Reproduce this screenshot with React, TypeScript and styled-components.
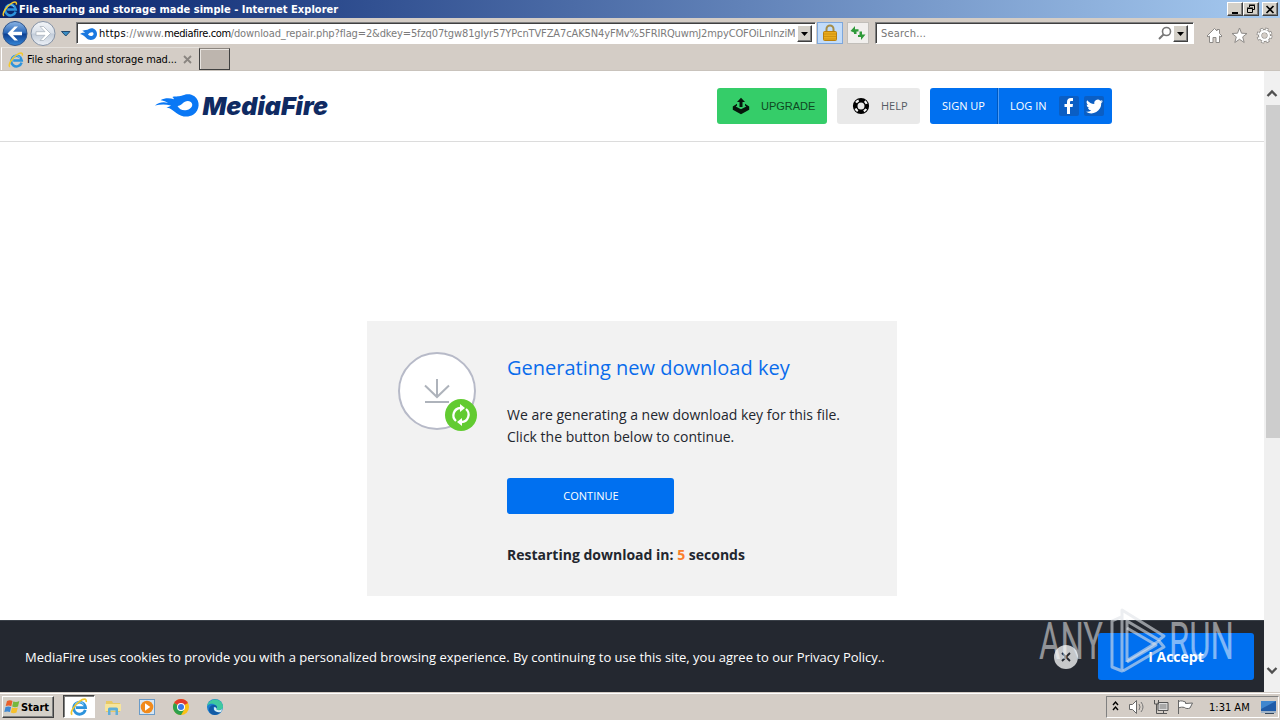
import type { ReactNode } from 'react'
import styled, { createGlobalStyle, css } from 'styled-components'

const GlobalStyle = createGlobalStyle`
  * {
    box-sizing: border-box;
  }
  body {
    margin: 0;
    overflow: hidden;
    background: #fff;
  }
  svg {
    display: block;
    flex: none;
  }
  button {
    margin: 0;
    padding: 0;
    border: 0;
    font: inherit;
  }
`

const ui = css`
  font-family: 'DejaVu Sans Condensed', 'DejaVu Sans', sans-serif;
  font-stretch: condensed;
  font-size: 11px;
  white-space: nowrap;
`

const raised = css`
  background: #d4d0c8;
  border: 1px solid;
  border-color: #fff #404040 #404040 #fff;
  box-shadow: inset -1px -1px 0 #808080;
`

const Screen = styled.div`
  position: relative;
  display: flex;
  flex-direction: column;
  width: 1280px;
  height: 720px;
  overflow: hidden;
  font-family: 'Open Sans', sans-serif;
`

/* window chrome */

const TitleBar = styled.header`
  ${ui}
  display: flex;
  align-items: center;
  height: 18px;
  padding: 0 2px;
  gap: 1px;
  color: #fff;
  font-weight: 700;
  background: linear-gradient(90deg, #0a246a 0%, #1c3a80 16%, #a6caf0 100%);
`

const TitleText = styled.span`
  flex: 1;
  letter-spacing: 0.03px;
`

const WindowButton = styled.button<{ $gap?: number }>`
  ${raised}
  width: 16px;
  height: 14px;
  margin-left: ${(p) => p.$gap ?? 0}px;
  display: flex;
  align-items: center;
  justify-content: center;
`

const NavBar = styled.div`
  ${ui}
  display: flex;
  height: 29px;
  padding: 3px 6px 0 2px;
  background: #d4cdc6;
`

const NavArrows = styled.div`
  display: flex;
  width: 74px;
`

const sunken = css`
  background: #fff;
  border: 1px solid;
  border-color: #808080 #fff #fff #808080;
  box-shadow: inset 1px 1px 0 #404040;
`

const Address = styled.div`
  ${sunken}
  display: flex;
  align-items: center;
  width: 740px;
  height: 22px;
  margin-top: 1px;
  padding: 1px 2px 0 3px;
`

const Url = styled.span`
  width: 696px;
  margin-left: 2px;
  margin-right: 2px;
  overflow: hidden;
  color: #7b7b7b;
  letter-spacing: -0.12px;
`

const Scheme = styled.span`
  letter-spacing: 0.27px;
  b {
    font-weight: 400;
    color: #000;
  }
`

const Domain = styled.span`
  color: #000;
  letter-spacing: -0.36px;
`

const DropButton = styled.button`
  ${raised}
  width: 15px;
  height: 17px;
  display: flex;
  align-items: center;
  justify-content: center;
`

const ToolButton = styled.button<{ $active?: boolean; $width: number; $left: number }>`
  display: flex;
  align-items: center;
  justify-content: center;
  width: ${(p) => p.$width}px;
  height: 22px;
  margin: 1px 0 0 ${(p) => p.$left}px;
  background: ${(p) => (p.$active ? '#c2dcfa' : '#f1efed')};
  border: 1px solid ${(p) => (p.$active ? '#7da7dc' : '#c2bfba')};
`

const Search = styled.div`
  ${sunken}
  display: flex;
  align-items: center;
  width: 319px;
  height: 22px;
  margin: 1px 0 0 6px;
  padding: 1px 5px 0 5px;
  color: #767676;
  span {
    flex: 1;
    letter-spacing: 0.2px;
  }
`

const NavIcons = styled.div`
  display: flex;
  gap: 8px;
  margin: 6px 0 0 12px;
`

const TabRow = styled.div`
  ${ui}
  display: flex;
  height: 24px;
  background: #d4cdc6;
  border-bottom: 1px solid #c9c3bc;
`

const Tab = styled.div`
  display: flex;
  align-items: center;
  width: 198px;
  margin-left: 1px;
  padding: 1px 7px 0 6px;
  border-left: 1px solid #fff;
  border-top: 1px solid #e6e2dd;
  color: #000;
  span {
    flex: 1;
    margin-left: 3px;
    letter-spacing: -0.12px;
  }
`

const NewTab = styled.div`
  width: 31px;
  height: 22px;
  margin-top: 1px;
  background: #bdb5ae;
  border: 1px solid #404040;
  border-top-color: #8c8680;
  box-shadow: inset 1px 1px 0 #e8e4e0;
`

/* page */

const Viewport = styled.div`
  display: flex;
  height: 621px;
`

const Page = styled.div`
  display: flex;
  flex-direction: column;
  align-items: center;
  width: 1264px;
  background: #fff;
`

const PageHeader = styled.div`
  display: flex;
  width: 100%;
  height: 71px;
  padding: 17px 152px 0 154px;
  border-bottom: 1px solid #dcdcdc;
`

const HeaderButtons = styled.div`
  display: flex;
  gap: 10px;
  margin-left: auto;
`

const HeaderButton = styled.button<{ $tone: 'green' | 'gray' }>`
  display: flex;
  align-items: center;
  height: 36px;
  width: ${(p) => (p.$tone === 'green' ? 110 : 83)}px;
  padding-left: 15px;
  gap: 11px;
  border-radius: 3px;
  font-family: ${(p) => (p.$tone === 'green' ? "'Liberation Sans'" : "'Open Sans'")}, sans-serif;
  font-size: 11px;
  color: ${(p) => (p.$tone === 'green' ? '#0f4722' : '#555b63')};
  background: ${(p) => (p.$tone === 'green' ? '#35cd69' : '#e9e9e9')};
  span {
    padding-bottom: ${(p) => (p.$tone === 'green' ? 0 : 2)}px;
  }
`

const Account = styled.div`
  display: flex;
  height: 36px;
  width: 182px;
  border-radius: 3px;
  background: #0070f0;
  color: #fff;
  font-size: 11px;
`

const SignUp = styled.div`
  display: flex;
  align-items: center;
  justify-content: center;
  width: 68px;
  padding-bottom: 2px;
  border-right: 1px solid #0057bd;
`

const LogIn = styled.div`
  display: flex;
  flex: 1;
  align-items: center;
  padding-left: 11px;
  border-left: 1px solid #4d9bf5;
  span {
    width: 49px;
    padding-bottom: 2px;
  }
`

const Social = styled.i`
  display: flex;
  align-items: center;
  justify-content: center;
  width: 20px;
  height: 20px;
  margin-right: 5px;
  border-radius: 2px;
  background: #0a5ec4;
`

const Card = styled.section`
  display: flex;
  width: 530px;
  height: 275px;
  margin-top: 179px;
  padding: 30px 0 0 30px;
  background: #f2f2f2;
`

const CardBody = styled.div`
  margin-left: 30px;
  color: #22262e;
  font-size: 14px;
  line-height: 22px;
`

const Heading = styled.h1`
  margin: 3px 0 22px;
  font-size: 20px;
  line-height: 28px;
  font-weight: 400;
  color: #0a6cec;
`

const Continue = styled.button`
  display: block;
  width: 167px;
  height: 36px;
  margin: 30px 0;
  padding-left: 1px;
  border-radius: 3px;
  background: #0070f0;
  color: #fff;
  font-size: 11px;
`

const Countdown = styled.div`
  font-weight: 700;
  em {
    font-style: normal;
    color: #fb7d2b;
  }
`

const CookieBar = styled.footer`
  display: flex;
  align-items: center;
  width: 100%;
  height: 72px;
  margin-top: auto;
  padding: 0 10px 0 25px;
  background: #242830;
  border-top: 1px solid #3a4048;
  color: #fff;
  font-size: 13px;
`

const CookieText = styled.span`
  flex: 1;
  white-space: nowrap;
`

const CloseCookie = styled.button`
  display: flex;
  align-items: center;
  justify-content: center;
  width: 24px;
  height: 24px;
  margin-right: 20px;
  border-radius: 50%;
  background: #c6c8ca;
`

const Accept = styled.button`
  width: 156px;
  height: 47px;
  border-radius: 3px;
  background: #0070f0;
  color: #fff;
  font-size: 14px;
  font-weight: 700;
`

const Scrollbar = styled.div`
  display: flex;
  flex-direction: column;
  align-items: center;
  justify-content: space-between;
  width: 16px;
  background: #f0f0f0;
`

const Thumb = styled.div`
  width: 14px;
  height: 333px;
  margin: 8px 0 auto 1px;
  background: #cdcdcd;
`

/* taskbar */

const Taskbar = styled.nav`
  ${ui}
  display: flex;
  height: 28px;
  padding: 2px 1px 0 2px;
  background: #d4cdc6;
  border-top: 1px solid #d4cdc6;
  box-shadow: inset 0 1px 0 #fff;
`

const Start = styled.button`
  ${raised}
  display: flex;
  align-items: center;
  width: 52px;
  height: 22px;
  margin-top: 1px;
  padding-left: 1px;
  font-weight: 700;
  letter-spacing: -0.05px;
`

const TaskItem = styled.div<{ $active?: boolean }>`
  display: flex;
  align-items: center;
  justify-content: center;
  width: 32px;
  height: 23px;
  margin-right: 2px;
  ${(p) =>
    p.$active &&
    css`
      background: #fff;
      border: 1px solid;
      border-color: #404040 #fff #fff #404040;
      box-shadow: inset 1px 1px 0 #808080;
    `}
`

const TaskItems = styled.div`
  display: flex;
  margin-left: 9px;
`

const Tray = styled.div`
  display: flex;
  align-items: center;
  width: 173px;
  height: 22px;
  margin: 1px 0 0 auto;
  padding-left: 5px;
  border: 1px solid;
  border-color: #808080 #fff #fff #808080;
  color: #000;
`

const Clock = styled.span`
  width: 51px;
  margin-left: 15px;
  letter-spacing: 0;
`

const Watermark = styled.svg`
  position: absolute;
  left: 1030px;
  top: 604px;
  pointer-events: none;
`

const IeIcon = ({ size = 16 }: { size?: number }) => (
  <svg width={size} height={size} viewBox="0 0 16 16" fill="none">
    <path
      d="M13.6 10.6A5.3 5.3 0 1 1 13.8 8.6H5.2"
      stroke="#2d93dc"
      strokeWidth="2.5"
    />
    <path d="M4.5 6.2A4 4 0 0 1 12 6" stroke="#74c5f5" strokeWidth="1" />
    <path
      d="M2 14.8C-.6 13.2 4 6.2 8.5 3c3.2-2.4 6.6-3 5.8.6"
      stroke="#f2c72c"
      strokeWidth="1.5"
    />
  </svg>
)

const RoundArrow = ({ back }: { back?: boolean }) => (
  <svg width="28" height="26" viewBox="0 0 28 26">
    <defs>
      <linearGradient id={back ? 'back' : 'fwd'} x1="0" y1="0" x2="0" y2="1">
        <stop offset="0" stopColor={back ? '#8cb5e5' : '#f3f5f8'} />
        <stop offset=".48" stopColor={back ? '#2866b8' : '#d8dfe8'} />
        <stop offset=".52" stopColor={back ? '#0d3f91' : '#c2ccd9'} />
        <stop offset="1" stopColor={back ? '#3687d8' : '#edf1f7'} />
      </linearGradient>
    </defs>
    <circle cx="13" cy="12.5" r="12" fill={`url(#${back ? 'back' : 'fwd'})`} stroke={back ? '#31568c' : '#8592a5'} />
    <path
      d={
        back
          ? 'M5.500 12.500l7-7h3.500l-5 5.200h9v3.600h-9l5 5.200h-3.500z'
          : 'M20.500 12.500l-7-7H10l5 5.200H6v3.600h9l-5 5.200h3.500z'
      }
      fill="#fff"
      stroke={back ? 'none' : '#a4adb8'}
      strokeWidth=".7"
    />
  </svg>
)

const Caret = () => (
  <svg width="7" height="4" viewBox="0 0 7 4">
    <path d="M0 0h7L3.500 4z" fill="#000" />
  </svg>
)

const flame =
  'M0 12.500c4-3.600 9-3.600 13-2.600C10 8 7 7.200 5.500 7.300 10 4.500 15 5 19 6.200c-.2-1-.8-1.700-1.600-2.300C22 3 24 4 28 2.300 31 .8 36 .5 39.500 3.300c6 4.600 5.300 14-1 18.200-5.500 3.500-12 2.300-16.500-1-4-3-6-5.300-10.500-6C14 13.500 15 13 16 12.400 10 11 5 11.300 0 12.500zM22.500 13c1.800 3.500 5.500 5 9.500 4 5-1.200 6.800-5.600 3.800-8-3-2.300-6.200-.5-8.300 1.500-1.600 1.500-3 2.400-5 2.500z'

const Logo = () => (
  <svg width="178" height="36" viewBox="0 0 178 36">
    <path d={flame} transform="translate(1 5)" fill="#0a78f5" fillRule="evenodd" />
    <text
      x="48.500"
      y="27"
      fontFamily="Inter, sans-serif"
      fontSize="25"
      fontWeight="900"
      fontStyle="italic"
      fill="#0f2a62"
      textLength="125.500"
      lengthAdjust="spacingAndGlyphs"
    >
      MediaFire
    </text>
  </svg>
)

const UpgradeIcon = () => (
  <svg width="18" height="18" viewBox="0 0 18 18">
    <path d="M5 6.800L.8 9.500v3.300L9 17.200l8.200-4.400V9.500L13 6.800v1.700l1.300 1L9 12.300 3.700 9.500l1.300-1z" fill="#06160b" />
    <path d="M9 .8l4 4.200h-2.500v5h-3V5H5z" fill="#06160b" />
  </svg>
)

const HelpIcon = () => (
  <svg width="18" height="18" viewBox="0 0 18 18" fill="none">
    <circle cx="9" cy="9" r="5.800" stroke="#000" strokeWidth="4.600" />
    <circle
      cx="9"
      cy="9"
      r="6"
      stroke="#f5f5f5"
      strokeWidth="2.200"
      strokeDasharray="3.200 6.225"
      strokeDashoffset="-3.110"
    />
  </svg>
)

const DownloadKeyIcon = () => (
  <svg width="80" height="82" viewBox="0 0 80 82" fill="none">
    <circle cx="40" cy="40" r="38" fill="#fff" stroke="#b7bac8" strokeWidth="2" />
    <path d="M40 28v18M28 34.500l12 11.500 12-11.500M28 51h24" stroke="#aeb3bb" strokeWidth="2" />
    <circle cx="64" cy="64" r="16" fill="#62cb31" />
    <path
      d="M59 70a7.400 7.400 0 0 1 4.500-13M69 58a7.400 7.400 0 0 1-4.500 13"
      stroke="#fff"
      strokeWidth="2.300"
    />
    <path d="M63 53l5 4-5 4zM65 67l-5 4 5 4z" fill="#fff" />
  </svg>
)

const ScrollArrow = ({ down }: { down?: boolean }) => (
  <svg width="16" height={down ? 33 : 26} viewBox={down ? '0 0 16 33' : '0 0 16 26'} fill="none">
    <path d={down ? 'M3.500 9l4.500 4.500L12.500 9' : 'M3.500 25L8 20.500l4.500 4.500'} stroke="#505050" strokeWidth="2.300" />
  </svg>
)

const Lock = () => (
  <svg width="16" height="18" viewBox="0 0 16 18">
    <path d="M4.500 8V5a3.500 3.500 0 0 1 7 0v3" fill="none" stroke="#a58d48" strokeWidth="2" />
    <rect x="1.500" y="7.500" width="13" height="9" rx="1" fill="#e9ab1c" stroke="#b9800d" />
    <path d="M2 10h12M2 12.500h12M2 15h12" stroke="#c88e10" strokeWidth=".8" />
  </svg>
)

const Refresh = () => (
  <svg width="16" height="16" viewBox="0 0 16 16" fill="#2f9a3a">
    <path d="M.5 6L5 1v3.300h3.500v2.200H6.500V9H4V7.500z" />
    <path d="M15.500 9.500L11 15v-3H8v-2h1.500V6.500H12v3z" />
  </svg>
)

const TrayIcons = () => (
  <svg width="82" height="18" viewBox="0 0 82 18" fill="none">
    <path d="M1 7l2.500-3L6 7M1 12l2.500-3L6 12" stroke="#000" strokeWidth="1.400" />
    <path d="M17.500 6.500h3l4-4v13l-4-4h-3z" fill="#fff" stroke="#686868" />
    <path d="M27 6q2 3 0 6M29 4q4 5 0 10" stroke="#777" />
    <path d="M46 4.500h10v8H46zM48 15.500h7M51.500 13v2" fill="#ddd" stroke="#555" />
    <path d="M42.500 2v4h4V2M44.500 6v9.500h4" stroke="#555" />
    <path d="M47.500 6h7v5h-7z" fill="#a8a8a8" />
    <path d="M66.500 2v14M66.500 3.500c3-1.500 5 0 7 .5v1.500l7-.5-2.500 5c-2 1-4.500.5-5.500-.5-2-.5-4-.5-6 .5" fill="#fff" stroke="#666" />
  </svg>
)

const StartFlag = () => (
  <svg width="17" height="16" viewBox="0 0 17 16">
    <path d="M3 2q3-1.500 5.500 0L7.300 7.200Q5 6 1.700 7z" fill="#e9602b" />
    <path d="M9.300 2.500q3 1.200 6-.5L14 7.500q-3 1.300-5.800 0z" fill="#75b83e" />
    <path d="M1.500 8q3-1.200 5.600 0L6 13q-2.500-1.200-5.700 0z" fill="#3f88d3" />
    <path d="M8 8.400q3 1.200 5.800 0L12.500 13.500q-3 1.300-5.700 0z" fill="#f6c02d" />
  </svg>
)

const FolderIcon = () => (
  <svg width="18" height="18" viewBox="0 0 18 18">
    <path d="M2 3h6l1 2h7v9H2z" fill="#e8c964" />
    <path d="M1 6h16v7H1z" fill="#f7e59c" />
    <path d="M4 17V11q0-1.500 1.500-1.500h7Q14 9.500 14 11v6h-2.500v-4.500h-5V17z" fill="#5faed8" />
  </svg>
)

const PlayerIcon = () => (
  <svg width="18" height="18" viewBox="0 0 18 18">
    <rect x="1.500" y="1.500" width="15" height="15" fill="#d6e6f4" stroke="#6a9bc8" />
    <circle cx="9" cy="9" r="6.300" fill="#f18a1b" />
    <path d="M7 5.300L12.300 9 7 12.700z" fill="#fff" />
  </svg>
)

const ChromeIcon = () => (
  <svg width="18" height="18" viewBox="0 0 18 18">
    <circle cx="9" cy="9" r="8" fill="#fbc116" />
    <path d="M9 9L2.070 5A8 8 0 0 1 15.930 5z" fill="#e33b2e" />
    <path d="M9 9L2.070 5A8 8 0 0 0 9 17l3-5z" fill="#2da04c" />
    <circle cx="9" cy="9" r="4" fill="#fff" />
    <circle cx="9" cy="9" r="3" fill="#3b78e7" />
  </svg>
)

const EdgeIcon = () => (
  <svg width="18" height="18" viewBox="0 0 18 18">
    <circle cx="9" cy="9" r="8" fill="#1a7fd0" />
    <path d="M1.200 8C2.500-.5 15.500-1 17 8c.2 2.500-1.500 4-4 4-2 0-3-.6-2.500-1.500C12 7 5 3.500 1.200 8z" fill="#3fc9a0" />
    <path d="M7.500 9c-1 3 2 5.800 7.800 4.200C11 19 3.500 17.500 3 12c-.2-3 2-5.500 5.500-5 2.500.3 3 2.200 2 3.500C10 9 9 8.300 7.500 9z" fill="#125aa5" />
    <path d="M10.500 10.500c-.5 1 .5 1.700 2.500 1.700 1.500 0 3-.6 3.700-1.900L15 14q-3 1-5.500-.7-2-1.500-1.500-4 2-.3 2.500 1.200z" fill="#d7eef4" />
  </svg>
)

const MonitorIcon = () => (
  <svg width="17" height="16" viewBox="0 0 17 16">
    <path d="M1 2h15v10H1z" fill="#1f5ba8" />
    <path d="M1 2h15L1 10z" fill="#3f86cf" />
    <path d="M1 12h15v2H1z" fill="#9fb2c6" />
    <path d="M5 14h9v1H5z" fill="#34475c" />
  </svg>
)

const taskIcons: ReactNode[] = [
  <FolderIcon key="folder" />,
  <PlayerIcon key="player" />,
  <ChromeIcon key="chrome" />,
  <EdgeIcon key="edge" />,
]

const BrowserChrome = () => (
  <>
    <TitleBar>
      <IeIcon />
      <TitleText>File sharing and storage made simple - Internet Explorer</TitleText>
      <WindowButton>
        <svg width="10" height="9" viewBox="0 0 10 9">
          <path d="M2 7h6v2H2z" />
        </svg>
      </WindowButton>
      <WindowButton $gap={-1}>
        <svg width="10" height="10" viewBox="0 0 10 10" fill="none" stroke="#000">
          <path d="M3.500 3V1.500h5v4H7M3 1h6M1.500 4.500h5v4h-5zM1 4h6" />
        </svg>
      </WindowButton>
      <WindowButton $gap={2}>
        <svg width="10" height="9" viewBox="0 0 10 9">
          <path d="M1.500 1l7 7M8.500 1l-7 7" stroke="#000" strokeWidth="1.700" />
        </svg>
      </WindowButton>
    </TitleBar>
    <NavBar>
      <NavArrows>
        <RoundArrow back />
        <RoundArrow />
        <svg width="16" height="26" viewBox="0 0 16 26">
          <path d="M3.500 10.500h8.500l-4.200 4.500z" fill="#3a8dc4" stroke="#234b70" />
        </svg>
      </NavArrows>
      <Address>
        <svg width="17" height="14" viewBox="0 0 17 14">
          <path
            d="M0 7c2-1.500 3.500-1.500 5-1C4 4.500 3 4 2 4c3-1.500 5-.5 7-2 4-2 8 1 8 5 0 4-4 7-8.500 5.500C5.500 11.500 5 8 0 7zm8 .5c1 2 5.500 2 5.500-.6C13.500 4.500 10 5 8 7.500z"
            fill="#1a78e0"
            fillRule="evenodd"
          />
        </svg>
        <Url>
          <Scheme>
            <b>https</b>://www.
          </Scheme>
          <Domain>mediafire.com</Domain>
          /download_repair.php?flag=2&amp;dkey=5fzq07tgw81gIyr57YPcnTVFZA7cAK5N4yFMv%5FRIRQuwmJ2mpyCOFOiLnlnziM
        </Url>
        <DropButton>
          <Caret />
        </DropButton>
      </Address>
      <ToolButton $active $width={26} $left={1}>
        <Lock />
      </ToolButton>
      <ToolButton $width={22} $left={4}>
        <Refresh />
      </ToolButton>
      <Search>
        <span>Search...</span>
        <svg width="15" height="15" viewBox="0 0 15 15" fill="none" stroke="#777">
          <circle cx="8.500" cy="5.500" r="4" strokeWidth="1.600" />
          <path d="M5.500 8.500L1 13" strokeWidth="2" />
        </svg>
        <DropButton>
          <Caret />
        </DropButton>
      </Search>
      <NavIcons>
        <svg width="17" height="17" viewBox="0 0 17 17">
          <path
            d="M1 9l7.500-7.500L11 4V2.500h2.500v4L16 9l-1 1-1.500-1v6.500H10v-5H7v5H3.500V9L2 10z"
            fill="#fff"
            stroke="#8d8a87"
          />
        </svg>
        <svg width="17" height="17" viewBox="0 0 17 17">
          <path d="M8.500 1l2 5.200 5.500.3-4.300 3.400 1.500 5.600-4.700-3.200-4.700 3.200 1.500-5.600L1 6.500l5.500-.3z" fill="#fff" stroke="#8d8a87" />
        </svg>
        <svg width="17" height="17" viewBox="0 0 17 17" fill="none">
          <circle cx="8.500" cy="8.500" r="6.500" stroke="#8d8a87" strokeWidth="3" strokeDasharray="3 2.105" />
          <circle cx="8.500" cy="8.500" r="4.500" stroke="#8d8a87" strokeWidth="4" />
          <circle cx="8.500" cy="8.500" r="6.300" stroke="#fff" strokeWidth="1.800" strokeDasharray="2 2.948" strokeDashoffset="-.5" />
          <circle cx="8.500" cy="8.500" r="4.300" stroke="#fff" strokeWidth="2.400" />
          <circle cx="8.500" cy="8.500" r="2" fill="#d4cdc6" />
        </svg>
      </NavIcons>
    </NavBar>
    <TabRow>
      <Tab>
        <IeIcon />
        <span>File sharing and storage mad...</span>
        <svg width="9" height="9" viewBox="0 0 9 9">
          <path d="M1 1l7 7M8 1L1 8" stroke="#8a8580" strokeWidth="1.800" />
        </svg>
      </Tab>
      <NewTab />
    </TabRow>
  </>
)

const App = () => (
  <Screen>
    <GlobalStyle />
    <BrowserChrome />
    <Viewport>
      <Page>
        <PageHeader>
          <Logo />
          <HeaderButtons>
            <HeaderButton $tone="green">
              <UpgradeIcon />
              <span>UPGRADE</span>
            </HeaderButton>
            <HeaderButton $tone="gray">
              <HelpIcon />
              <span>HELP</span>
            </HeaderButton>
            <Account>
              <SignUp>SIGN UP</SignUp>
              <LogIn>
                <span>LOG IN</span>
                <Social>
                  <svg width="18" height="18" viewBox="0 0 18 18" fill="#fff">
                    <path d="M7 17V10H4.500V7H7V5c0-2.700 1.500-4 4-4h2v3h-1.500C10.300 4 10 4.500 10 5.300V7h3l-.4 3H10v7z" />
                  </svg>
                </Social>
                <Social>
                  <svg width="17" height="17" viewBox="0 0 24 24" fill="#fff">
                    <path d="M24 4.600a10 10 0 0 1-2.800.8 5 5 0 0 0 2.100-2.700 10 10 0 0 1-3.100 1.200 4.900 4.900 0 0 0-8.400 4.500A14 14 0 0 1 1.700 3.100a4.900 4.900 0 0 0 1.500 6.600 5 5 0 0 1-2.200-.6 4.900 4.900 0 0 0 3.900 4.900 5 5 0 0 1-2.200.1 4.900 4.900 0 0 0 4.600 3.400A9.900 9.900 0 0 1 0 19.500 14 14 0 0 0 21.500 7.100 10 10 0 0 0 24 4.600z" />
                  </svg>
                </Social>
              </LogIn>
            </Account>
          </HeaderButtons>
        </PageHeader>
        <Card>
          <DownloadKeyIcon />
          <CardBody>
            <Heading>Generating new download key</Heading>
            We are generating a new download key for this file.
            <br />
            Click the button below to continue.
            <Continue>CONTINUE</Continue>
            <Countdown>
              Restarting download in: <em>5</em> seconds
            </Countdown>
          </CardBody>
        </Card>
        <CookieBar>
          <CookieText>
            MediaFire uses cookies to provide you with a personalized browsing experience. By continuing to use this
            site, you agree to our Privacy Policy..
          </CookieText>
          <CloseCookie>
            <svg width="10" height="10" viewBox="0 0 10 10">
              <path d="M1 1l8 8M9 1L1 9" stroke="#24282f" strokeWidth="1.800" />
            </svg>
          </CloseCookie>
          <Accept>I Accept</Accept>
        </CookieBar>
      </Page>
      <Scrollbar>
        <ScrollArrow />
        <Thumb />
        <ScrollArrow down />
      </Scrollbar>
    </Viewport>
    <Taskbar>
      <Start>
        <StartFlag />
        Start
      </Start>
      <TaskItems>
        <TaskItem $active>
          <IeIcon size={18} />
        </TaskItem>
        {taskIcons.map((icon, i) => (
          <TaskItem key={i}>{icon}</TaskItem>
        ))}
      </TaskItems>
      <Tray>
        <TrayIcons />
        <Clock>1:31 AM</Clock>
        <MonitorIcon />
      </Tray>
    </Taskbar>
    <Watermark width="230" height="74" viewBox="0 0 230 74" fill="none">
      <g
        fill="#fff"
        fillOpacity=".5"
        fontFamily="Roboto, sans-serif"
        fontSize="51"
        fontWeight="400"
      >
        <text x="9" y="55" textLength="64" lengthAdjust="spacingAndGlyphs">
          ANY
        </text>
        <text x="139" y="55" textLength="65" lengthAdjust="spacingAndGlyphs">
          RUN
        </text>
      </g>
      <g stroke="#dfe3e8" strokeOpacity=".6" strokeWidth="3" strokeLinejoin="round">
        <path d="M91 13l-9 4v46l10 4V6l42 26-5 4-32-19v41" />
        <path d="M97 24l29 17-29 17" />
        <path d="M93 67l41-24-5-6-31 19" />
      </g>
    </Watermark>
  </Screen>
)

export default App
